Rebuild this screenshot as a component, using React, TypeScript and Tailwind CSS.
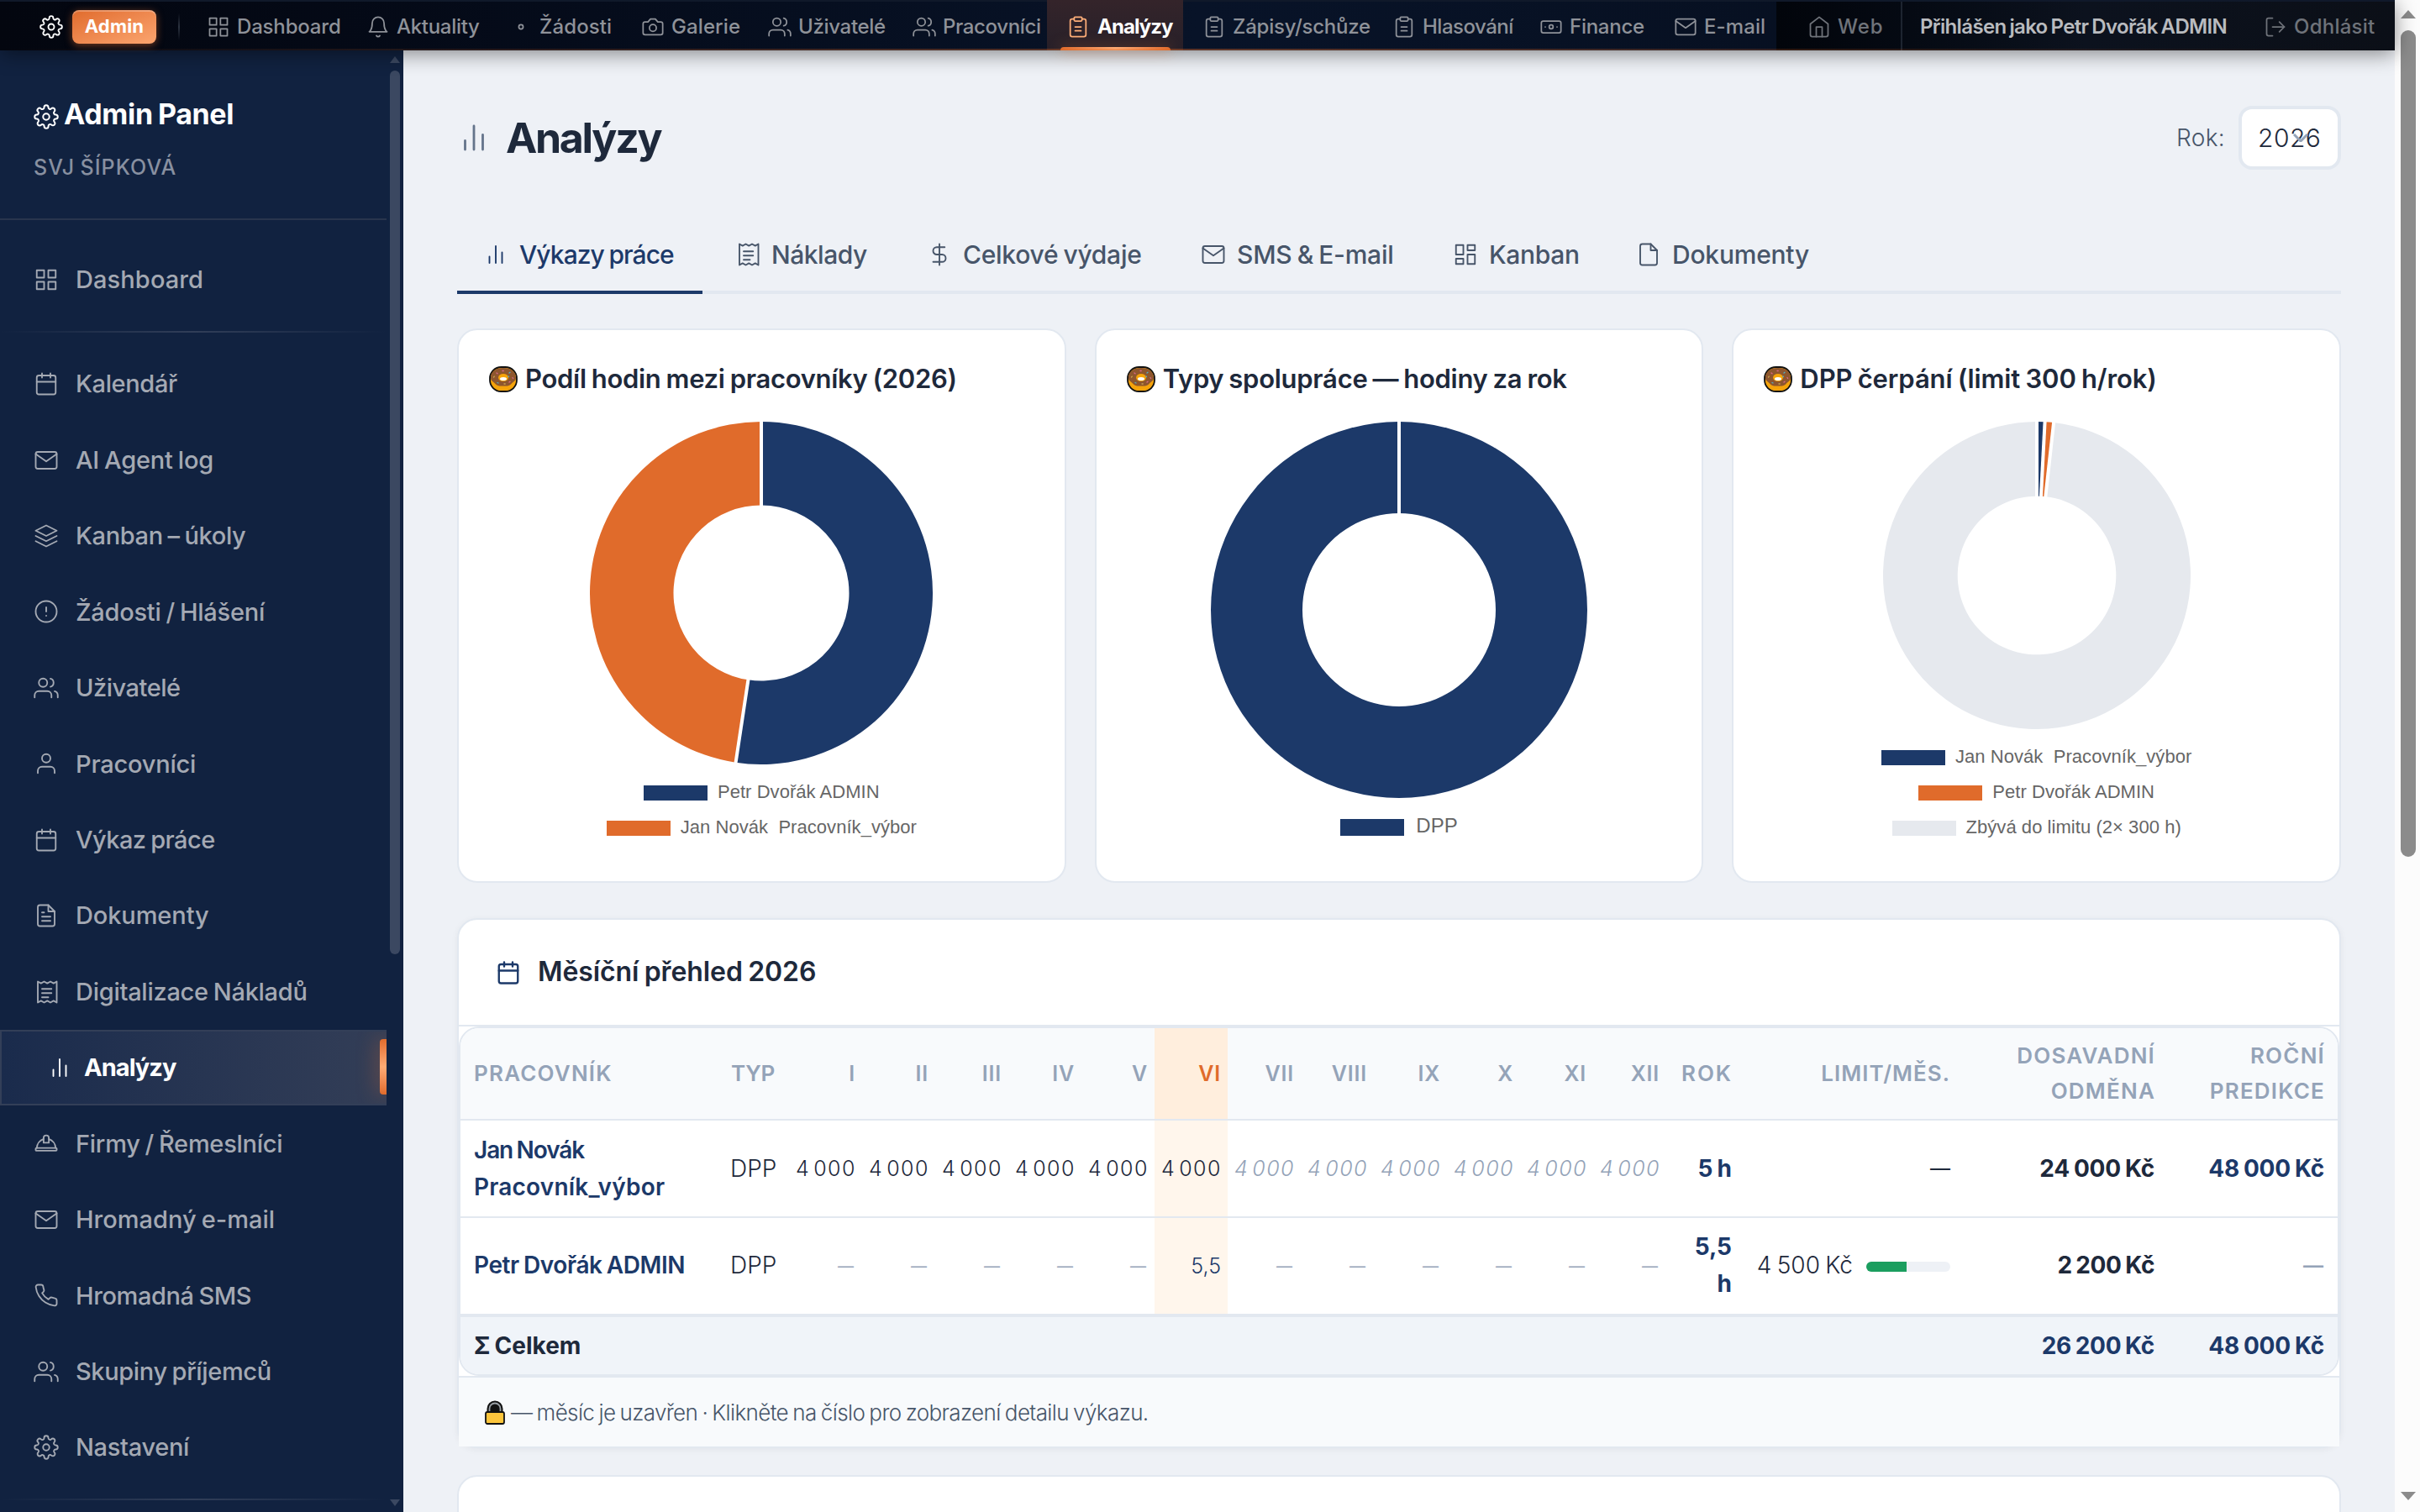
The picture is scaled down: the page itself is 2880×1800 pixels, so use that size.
import type { ReactNode } from 'react';

/* ---------- icons ---------- */

type IconName =
  | 'settings' | 'grid' | 'bell' | 'dot' | 'camera' | 'users' | 'user' | 'clipboard' | 'banknote' | 'mail'
  | 'home' | 'logout' | 'calendar' | 'layers' | 'alert' | 'fileText' | 'file' | 'receipt' | 'bars'
  | 'helmet' | 'phone' | 'dollar' | 'board';

const ICONS: Record<IconName, ReactNode> = {
  settings: (
    <>
      <circle cx="12" cy="12" r="3" />
      <path d="M19.4 15a1.65 1.65 0 0 0 .33 1.82l.06.06a2 2 0 1 1-2.83 2.83l-.06-.06a1.65 1.65 0 0 0-1.82-.33 1.65 1.65 0 0 0-1 1.51V21a2 2 0 0 1-4 0v-.09A1.65 1.65 0 0 0 9 19.4a1.65 1.65 0 0 0-1.82.33l-.06.06a2 2 0 1 1-2.83-2.83l.06-.06A1.65 1.65 0 0 0 4.68 15a1.65 1.65 0 0 0-1.51-1H3a2 2 0 0 1 0-4h.09A1.65 1.65 0 0 0 4.6 9a1.65 1.65 0 0 0-.33-1.82l-.06-.06a2 2 0 1 1 2.83-2.83l.06.06A1.65 1.65 0 0 0 9 4.68a1.65 1.65 0 0 0 1-1.51V3a2 2 0 0 1 4 0v.09a1.65 1.65 0 0 0 1 1.51 1.65 1.65 0 0 0 1.82-.33l.06-.06a2 2 0 1 1 2.83 2.83l-.06.06A1.65 1.65 0 0 0 19.4 9a1.65 1.65 0 0 0 1.51 1H21a2 2 0 0 1 0 4h-.09a1.65 1.65 0 0 0-1.51 1z" />
    </>
  ),
  grid: (
    <>
      <rect x="3" y="3" width="7" height="7" />
      <rect x="14" y="3" width="7" height="7" />
      <rect x="14" y="14" width="7" height="7" />
      <rect x="3" y="14" width="7" height="7" />
    </>
  ),
  bell: (
    <>
      <path d="M18 8A6 6 0 0 0 6 8c0 7-3 9-3 9h18s-3-2-3-9" />
      <path d="M13.73 21a2 2 0 0 1-3.46 0" />
    </>
  ),
  dot: <circle cx="12" cy="12" r="2.2" />,
  camera: (
    <>
      <path d="M14.5 4h-5L7 7H4a2 2 0 0 0-2 2v9a2 2 0 0 0 2 2h16a2 2 0 0 0 2-2V9a2 2 0 0 0-2-2h-3l-2.500-3z" />
      <circle cx="12" cy="13" r="3.500" />
    </>
  ),
  users: (
    <>
      <path d="M17 21v-2a4 4 0 0 0-4-4H5a4 4 0 0 0-4 4v2" />
      <circle cx="9" cy="7" r="4" />
      <path d="M23 21v-2a4 4 0 0 0-3-3.870" />
      <path d="M16 3.130a4 4 0 0 1 0 7.750" />
    </>
  ),
  user: (
    <>
      <path d="M20 21v-2a4 4 0 0 0-4-4H8a4 4 0 0 0-4 4v2" />
      <circle cx="12" cy="7" r="4" />
    </>
  ),
  clipboard: (
    <>
      <path d="M16 4h2a2 2 0 0 1 2 2v14a2 2 0 0 1-2 2H6a2 2 0 0 1-2-2V6a2 2 0 0 1 2-2h2" />
      <rect x="8" y="2" width="8" height="4" rx="1" />
      <path d="M9 12h6M9 16h6" />
    </>
  ),
  banknote: (
    <>
      <rect x="2" y="6" width="20" height="12" rx="2" />
      <circle cx="12" cy="12" r="2" />
      <path d="M6 12h.01M18 12h.01" />
    </>
  ),
  mail: (
    <>
      <rect x="2" y="4" width="20" height="16" rx="2" />
      <path d="m22 6-10 7L2 6" />
    </>
  ),
  home: (
    <>
      <path d="m3 9 9-7 9 7v11a2 2 0 0 1-2 2H5a2 2 0 0 1-2-2z" />
      <path d="M9 22V12h6v10" />
    </>
  ),
  logout: (
    <>
      <path d="M9 21H5a2 2 0 0 1-2-2V5a2 2 0 0 1 2-2h4" />
      <path d="m16 17 5-5-5-5" />
      <path d="M21 12H9" />
    </>
  ),
  calendar: (
    <>
      <rect x="3" y="4" width="18" height="18" rx="2" />
      <path d="M16 2v4M8 2v4M3 10h18" />
    </>
  ),
  layers: (
    <>
      <path d="M12 2 2 7l10 5 10-5-10-5z" />
      <path d="m2 17 10 5 10-5" />
      <path d="m2 12 10 5 10-5" />
    </>
  ),
  alert: (
    <>
      <circle cx="12" cy="12" r="10" />
      <path d="M12 8v4M12 16h.01" />
    </>
  ),
  fileText: (
    <>
      <path d="M14 2H6a2 2 0 0 0-2 2v16a2 2 0 0 0 2 2h12a2 2 0 0 0 2-2V8z" />
      <path d="M14 2v6h6M16 13H8M16 17H8M10 9H8" />
    </>
  ),
  file: (
    <>
      <path d="M14 2H6a2 2 0 0 0-2 2v16a2 2 0 0 0 2 2h12a2 2 0 0 0 2-2V8z" />
      <path d="M14 2v6h6" />
    </>
  ),
  receipt: (
    <>
      <path d="M4 2v20l3-1.700 3 1.700 3-1.700 3 1.700 3-1.700 3 1.700V2l-3 1.700L16 2l-3 1.700L10 2 7 3.700z" />
      <path d="M8 9h9M8 13h9M8 17h6" />
    </>
  ),
  bars: <path d="M18 20V10M12 20V4M6 20v-6" />,
  helmet: (
    <>
      <rect x="2" y="16.500" width="20" height="2.600" rx="0.700" />
      <path d="M3 16.500a9 9.500 0 0 1 6.500-8.500M21 16.500a9 9.500 0 0 0-6.500-8.500" />
      <path d="M9.500 11.500h5V7a2.500 2.500 0 0 0-5 0z" />
    </>
  ),
  phone: (
    <path d="M22 16.920v3a2 2 0 0 1-2.180 2 19.790 19.790 0 0 1-8.630-3.070 19.500 19.500 0 0 1-6-6 19.790 19.790 0 0 1-3.070-8.670A2 2 0 0 1 4.110 2h3a2 2 0 0 1 2 1.720 12.840 12.840 0 0 0 .7 2.810 2 2 0 0 1-.45 2.110L8.090 9.910a16 16 0 0 0 6 6l1.270-1.270a2 2 0 0 1 2.110-.45 12.840 12.840 0 0 0 2.810.7A2 2 0 0 1 22 16.920z" />
  ),
  dollar: <path d="M12 2v20M17 5H9.500a3.500 3.500 0 0 0 0 7h5a3.500 3.500 0 0 1 0 7H6" />,
  board: (
    <>
      <rect x="3" y="3" width="7" height="9" />
      <rect x="14" y="3" width="7" height="5" />
      <rect x="14" y="12" width="7" height="9" />
      <rect x="3" y="16" width="7" height="5" />
    </>
  ),
};

function Icon({ name, className = 'size-[30px]', sw = 1.5 }: { name: IconName; className?: string; sw?: number }) {
  return (
    <svg
      viewBox="0 0 24 24"
      fill="none"
      stroke="currentColor"
      strokeWidth={sw}
      strokeLinecap="round"
      strokeLinejoin="round"
      className={`shrink-0 overflow-visible ${className}`}
    >
      {ICONS[name]}
    </svg>
  );
}

function DonutEmoji() {
  return (
    <svg viewBox="0 0 34 31" className="h-[31px] w-[34px] shrink-0">
      <rect x="1" y="1" width="32" height="29" rx="13.500" fill="#f5a30a" stroke="#111" strokeWidth="1.800" />
      <path d="M2 14C2 6.500 8 2 17 2s15 4.500 15 12c0 4-4 4.500-5.500 7-2.500 3-5.500 2.500-9.500 2.500S10 24 7.500 21C6 18.500 2 18 2 14z" fill="#8e562e" />
      <ellipse cx="17" cy="13.500" rx="6" ry="4.500" fill="#f5a30a" />
      <ellipse cx="17" cy="15" rx="4" ry="2" fill="#fff" />
      <g strokeWidth="1.300" strokeLinecap="round">
        <path d="M9 8l1 .8M24 19l1-.8M16 5.500h1.200M28 13.500l.6 1" stroke="#d9698c" />
        <path d="M24 8l1-.8M10 19.500l1 .5M23 12l.5.6" stroke="#4fb0c6" />
        <path d="M5.500 13l.8-.9M18 21h1.200" stroke="#c9a44c" />
      </g>
    </svg>
  );
}

function LockEmoji() {
  return (
    <svg viewBox="0 0 24 29" className="h-[29px] w-6 shrink-0">
      <path d="M2.500 15V10a9.500 9.500 0 0 1 19 0v5z" fill="#111" />
      <path d="M5.500 15v-5a6.500 6.500 0 0 1 13 0v5" fill="none" stroke="#9aa0a6" strokeWidth="1.800" />
      <rect x="1" y="14" width="22" height="14" rx="2" fill="#fcc53c" stroke="#111" strokeWidth="1.800" />
    </svg>
  );
}

/* ---------- top bar ---------- */

type NavItem = { icon: IconName; label: string; box: string; text: string };

const TOP_NAV: NavItem[] = [
  { icon: 'grid', label: 'Dashboard', box: 'w-[190px]', text: 'tracking-[-0.17px]' },
  { icon: 'bell', label: 'Aktuality', box: 'w-[170px]', text: 'tracking-[-0.3px]' },
  { icon: 'dot', label: 'Žádosti', box: 'w-[157px]', text: 'tracking-[0.1px]' },
  { icon: 'camera', label: 'Galerie', box: 'w-[151px]', text: 'tracking-[0.1px]' },
  { icon: 'users', label: 'Uživatelé', box: 'w-[172px]', text: 'tracking-[-0.32px]' },
  { icon: 'users', label: 'Pracovníci', box: 'w-[160px]', text: 'tracking-[-0.36px]' },
];

const TOP_NAV_AFTER: NavItem[] = [
  { icon: 'clipboard', label: 'Zápisy/schůze', box: 'w-[226px]', text: 'tracking-[-0.23px]' },
  { icon: 'clipboard', label: 'Hlasování', box: 'w-[175px]', text: 'tracking-[-0.5px]' },
  { icon: 'banknote', label: 'Finance', box: 'w-[160px]', text: 'tracking-[-0.26px]' },
  { icon: 'mail', label: 'E-mail', box: 'w-[122px]', text: 'tracking-[0.1px]' },
];

function TopLink({ item }: { item: NavItem }) {
  return (
    <a className={`flex h-full shrink-0 items-center gap-2 ${item.box}`}>
      <Icon name={item.icon} className="size-7" />
      <span className={item.text}>{item.label}</span>
    </a>
  );
}

function TopBar() {
  return (
    <header className="relative z-20 flex h-[60px] w-[2850px] shrink-0 border-t-2 border-t-[#10192a] bg-linear-to-r from-[#03060f] via-[#081328] to-[#060d1b] pt-px text-2xl font-medium whitespace-nowrap text-[#8f9299] shadow-[0_4px_24px_rgba(0,0,0,0.45)]">
      <div className="flex w-[246px] shrink-0 items-center pl-[47px] text-white">
        <Icon name="settings" className="size-7" sw={1.6} />
        <span className="ml-[11px] flex h-10 w-[100px] items-center justify-center rounded-lg bg-linear-to-br from-[#e06b2b] to-[#fba56f] text-[22px] font-bold tracking-[0.2px] shadow-[0_2px_10px_rgba(224,107,43,0.5),inset_0_2px_0_rgba(255,255,255,0.25)]">
          Admin
        </span>
        <span className="ml-[26px] h-8 w-0.5 bg-linear-to-b from-transparent via-[#2c3340] to-transparent" />
      </div>
      {TOP_NAV.map((item) => (
        <TopLink key={item.label} item={item} />
      ))}
      <a className="relative -mt-[3px] flex h-[60px] w-[162px] shrink-0 items-center gap-2 bg-linear-to-b from-[#34242a] to-[#272029] pt-[3px] pl-[23px] font-bold text-white">
        <Icon name="clipboard" className="size-7 text-[#fdae79]" />
        <span className="ml-px tracking-[-0.96px]">Analýzy</span>
        <span className="absolute bottom-0 left-4 h-1 w-[131px] rounded-t bg-linear-to-r from-[#e06b2b] via-[#ffab74] to-[#e06b2b] shadow-[0_0_16px_rgba(224,107,43,0.6)]" />
      </a>
      <div className="flex pl-[23px]">
        {TOP_NAV_AFTER.map((item) => (
          <TopLink key={item.label} item={item} />
        ))}
      </div>
      <div className="-mt-px flex min-w-0 flex-1 bg-linear-to-r from-[#02050b] via-[#0c121e] to-[#0b0f17] pt-px text-[#6f737a]">
        <a className="-mt-px flex w-[150px] shrink-0 items-center gap-2 border-r-2 border-[#1d2430] pt-px pl-[37px]">
          <Icon name="home" className="size-7" />
          <span className="tracking-[0.9px]">Web</span>
        </a>
        <span className="flex w-[430px] shrink-0 items-center pl-[21px] font-semibold tracking-[-0.65px] text-[#b9bbbf]">
          Přihlášen jako Petr Dvořák ADMIN
        </span>
        <a className="flex items-center gap-2">
          <Icon name="logout" className="size-7" />
          <span className="tracking-[0.24px]">Odhlásit</span>
        </a>
      </div>
      <div className="pointer-events-none absolute inset-x-0 bottom-0 h-0.5 bg-linear-to-r from-transparent via-[#e06b2b]/40 to-transparent" />
    </header>
  );
}

/* ---------- sidebar ---------- */

const SIDE_NAV: { icon: IconName; label: string; text: string; active?: boolean }[] = [
  { icon: 'calendar', label: 'Kalendář', text: 'tracking-[-0.37px]' },
  { icon: 'mail', label: 'AI Agent log', text: 'tracking-[-0.2px]' },
  { icon: 'layers', label: 'Kanban – úkoly', text: 'tracking-[-0.38px]' },
  { icon: 'alert', label: 'Žádosti / Hlášení', text: 'tracking-[-0.25px]' },
  { icon: 'users', label: 'Uživatelé', text: 'tracking-[-0.48px]' },
  { icon: 'user', label: 'Pracovníci', text: 'tracking-[-0.22px]' },
  { icon: 'calendar', label: 'Výkaz práce', text: 'tracking-[-0.55px]' },
  { icon: 'fileText', label: 'Dokumenty', text: 'tracking-[-0.1px]' },
  { icon: 'receipt', label: 'Digitalizace Nákladů', text: 'tracking-[-0.27px]' },
  { icon: 'bars', label: 'Analýzy', text: 'tracking-[-0.96px]', active: true },
  { icon: 'helmet', label: 'Firmy / Řemeslníci', text: 'tracking-[-0.27px]' },
  { icon: 'mail', label: 'Hromadný e-mail', text: 'tracking-[0px]' },
  { icon: 'phone', label: 'Hromadná SMS', text: 'tracking-[-0.4px]' },
  { icon: 'users', label: 'Skupiny příjemců', text: 'tracking-[-0.37px]' },
  { icon: 'settings', label: 'Nastavení', text: 'tracking-[-0.33px]' },
];

function Sidebar() {
  return (
    <aside className="flex w-[480px] shrink-0 overflow-hidden bg-[#112240] text-[29px] font-medium whitespace-nowrap text-[#a4a9b3]">
      <div className="flex w-[460px] flex-col">
        <div className="flex h-[202px] shrink-0 flex-col border-b-2 border-[#29354d] pt-[51px] pl-10">
          <div className="flex h-12 items-center gap-[6px] text-[34px] font-bold tracking-[-0.35px] text-white">
            <Icon name="settings" className="mt-2 size-[30px]" sw={1.6} />
            <span>Admin Panel</span>
          </div>
          <div className="mt-[22px] h-9 text-[25px] leading-9 tracking-[1.1px] text-[#8890a0]">SVJ ŠÍPKOVÁ</div>
        </div>
        <a className="mt-[26px] flex h-[90px] shrink-0 items-center gap-5 pl-10">
          <Icon name="grid" />
          <span className="tracking-[0.1px]">Dashboard</span>
        </a>
        <div className="mt-4 h-0.5 shrink-0 bg-linear-to-r from-transparent via-[#313e58] to-transparent" />
        <nav className="mt-4 flex flex-col">
          {SIDE_NAV.map((item) =>
            item.active ? (
              <a
                key={item.label}
                className="relative flex h-[90.430px] items-center gap-[14px] overflow-hidden border-y-2 border-l-2 border-[#333f58] bg-linear-to-r from-[#1a2b4c] to-[#333e57] pl-[54px] font-bold text-white"
              >
                <Icon name={item.icon} />
                <span className={item.text}>{item.label}</span>
                <span className="absolute top-[9px] right-0 h-[66px] w-2 rounded-l bg-linear-to-b from-[#e06b2b] via-[#ffab74] to-[#e06b2b] shadow-[0_0_24px_rgba(224,107,43,0.6)]" />
              </a>
            ) : (
              <a key={item.label} className="flex h-[90.430px] items-center gap-5 pl-10">
                <Icon name={item.icon} />
                <span className={item.text}>{item.label}</span>
              </a>
            ),
          )}
        </nav>
        <div className="mt-4 h-0.5 shrink-0 bg-linear-to-r from-transparent via-[#313e58] to-transparent" />
      </div>
      <div className="flex flex-1 flex-col items-center pr-1 pl-1">
        <svg viewBox="0 0 12 8" className="mt-[7px] h-2 w-3">
          <path d="M6 0l6 8H0z" fill="#3b4861" />
        </svg>
        <div className="mt-[9px] h-[1052px] w-3 rounded-full bg-[#3b4861]" />
        <svg viewBox="0 0 12 8" className="mt-auto mb-[7px] h-2 w-3">
          <path d="M6 8l6-8H0z" fill="#3b4861" />
        </svg>
      </div>
    </aside>
  );
}

/* ---------- donut charts ---------- */

const NAVY = '#1c3969';
const ORANGE = '#e06b2b';
const GREY = '#e6e9ee';

type Slice = { value: number; color: string };

function polar(c: number, r: number, turn: number) {
  const a = turn * 2 * Math.PI - Math.PI / 2;
  return `${c + r * Math.cos(a)} ${c + r * Math.sin(a)}`;
}

function Donut({ size, inner, slices, className }: { size: number; inner: number; slices: Slice[]; className: string }) {
  const c = size / 2;
  const total = slices.reduce((s, x) => s + x.value, 0);
  let at = 0;
  const arcs = slices.map((s) => {
    const start = at;
    at += s.value / total;
    return { ...s, start, end: Math.min(at, start + 0.99999) };
  });
  return (
    <svg viewBox={`0 0 ${size} ${size}`} className={className}>
      {arcs.map((s) => {
        const large = s.end - s.start > 0.5 ? 1 : 0;
        return (
          <path
            key={s.start}
            fill={s.color}
            d={`M${polar(c, c, s.start)}A${c} ${c} 0 ${large} 1 ${polar(c, c, s.end)}L${polar(c, inner, s.end)}A${inner} ${inner} 0 ${large} 0 ${polar(c, inner, s.start)}Z`}
          />
        );
      })}
      {arcs.map((s) => (
        <path key={s.start} d={`M${polar(c, inner - 2, s.start)}L${polar(c, c + 2, s.start)}`} stroke="#fff" strokeWidth="4" />
      ))}
    </svg>
  );
}

function LegendRow({ color, label, big }: { color: string; label: string; big?: boolean }) {
  return (
    <div className={big ? 'flex h-[44px] items-center gap-[14px] text-2xl' : 'flex h-[42px] items-center gap-3 text-[22px] tracking-[0.05px]'}>
      <span className={big ? 'h-5 w-[76px]' : 'h-[18px] w-[76px]'} style={{ backgroundColor: color }} />
      <span className="-mt-1 whitespace-pre">{label}</span>
    </div>
  );
}

function ChartCard({ title, text, children, legend }: { title: string; text: string; children: ReactNode; legend: ReactNode }) {
  return (
    <section className="flex h-[660px] flex-1 flex-col items-center rounded-3xl border-2 border-[#e2e8f0] bg-white pt-[34px]">
      <h2 className="flex h-12 items-center gap-[9px] self-stretch px-9 text-[31px] font-semibold text-[#1e293b]">
        <DonutEmoji />
        <span className={text}>{title}</span>
      </h2>
      <div className="mt-[27px]">{children}</div>
      <div className="mt-[13px] flex flex-col items-center font-['Liberation_Sans',sans-serif] text-[#666] [word-spacing:0px]">
        {legend}
      </div>
    </section>
  );
}

/* ---------- monthly table ---------- */

const MONTHS = ['I', 'II', 'III', 'IV', 'V', 'VI', 'VII', 'VIII', 'IX', 'X', 'XI', 'XII'];
const CURRENT = 5;

function MonthlyTable() {
  return (
    <div className="overflow-hidden rounded-3xl border-2 border-[#e2e8f0]">
      <table className="w-full table-fixed border-separate border-spacing-0 text-[28px] leading-[44px] text-[#1e293b]">
        <colgroup>
          <col className="w-[306px]" />
          <col className="w-[85px]" />
          {MONTHS.map((m) => (
            <col key={m} className="w-[87px]" />
          ))}
          <col className="w-[96px]" />
          <col className="w-[259px]" />
          <col className="w-[243px]" />
          <col className="w-[201px]" />
        </colgroup>
        <thead className="text-[26px] leading-[42px] text-[#94a3b8]">
          <tr className="h-[110px] bg-[#f8fafc] [&>th]:border-b-2 [&>th]:border-[#e2e8f0] [&>th]:p-0 [&>th]:font-semibold">
            <th className="text-left tracking-[1.2px]"><div className="-mt-px pl-4">PRACOVNÍK</div></th>
            <th className="text-left tracking-[-0.3px]"><div className="-mt-px pl-4">TYP</div></th>
            {MONTHS.map((m, i) => (
              <th
                key={m}
                className={
                  i === CURRENT
                    ? 'bg-[#ffeedd] text-right text-[25px] tracking-[0.8px] text-[#e06b2b]'
                    : 'text-right text-[25px] tracking-[0.8px]'
                }
              >
                <div className="pr-2">{m}</div>
              </th>
            ))}
            <th className="text-right tracking-[1.9px]"><div className="-mt-px pr-[17px]">ROK</div></th>
            <th className="text-right tracking-[1px]"><div className="-mt-px pr-[17px]">LIMIT/MĚS.</div></th>
            <th className="text-right tracking-[1.2px]"><div className="pr-[16px]">DOSAVADNÍ<br />ODMĚNA</div></th>
            <th className="text-right tracking-[1.2px]"><div className="pr-[15px]">ROČNÍ<br />PREDIKCE</div></th>
          </tr>
        </thead>
        <tbody>
          <tr className="h-[116px] [&>td]:border-b-2 [&>td]:border-[#e2e8f0] [&>td]:p-0">
            <td className="font-semibold text-[#1c3969]">
              <div className="pl-4">
                <div className="tracking-[-1.1px]">Jan Novák</div>
                <div className="tracking-[0.2px]">Pracovník_výbor</div>
              </div>
            </td>
            <td className="font-light"><div className="pl-[15px]">DPP</div></td>
            {MONTHS.map((m, i) => (
              <td
                key={m}
                className={
                  i === CURRENT
                    ? 'bg-[#fff6ec] text-right text-[25px] font-light tracking-[1.5px] [word-spacing:-4.500px]'
                    : i > CURRENT
                      ? 'text-right text-[25px] font-light tracking-[1.5px] text-[#94a3b8] italic [word-spacing:-4.500px]'
                      : 'text-right text-[25px] font-light tracking-[1.5px] [word-spacing:-4.500px]'
                }
              >
                <div className="pr-[7px]">4 000</div>
              </td>
            ))}
            <td className="text-right font-bold text-[#1c3969]"><div className="pr-[18px]">5 h</div></td>
            <td className="text-right font-normal"><div className="pr-[17px] text-[24px]">—</div></td>
            <td className="text-right font-bold tracking-[-0.2px]"><div className="pr-[17px]">24 000 Kč</div></td>
            <td className="text-right font-bold tracking-[-0.2px] text-[#1c3969]"><div className="pr-4">48 000 Kč</div></td>
          </tr>
          <tr className="h-[114px] [&>td]:p-0">
            <td className="font-semibold tracking-[-0.4px] text-[#1c3969]"><div className="-mt-0.5 pl-4">Petr Dvořák ADMIN</div></td>
            <td className="font-light"><div className="-mt-0.5 pl-[15px]">DPP</div></td>
            {MONTHS.map((m, i) => (
              <td
                key={m}
                className={
                  i === CURRENT
                    ? 'bg-[#fff6ec] text-right text-[25px] font-light text-[#1c3969]'
                    : 'text-right text-[19px] text-[#94a3b8]'
                }
              >
                <div className={i === CURRENT ? 'pr-2' : 'pt-0.5 pr-2.5'}>{i === CURRENT ? '5,5' : '—'}</div>
              </td>
            ))}
            <td className="text-right font-bold text-[#1c3969]"><div className="-mt-0.5 pr-[18px]">5,5<br />h</div></td>
            <td>
              <div className="-mt-0.5 flex items-center justify-end gap-4 pr-[17px] font-light tracking-[0px]">
                4 500 Kč
                <div className="mt-1 h-3 w-[100px] overflow-hidden rounded-full bg-[#eef1f6]">
                  <div className="h-full w-[48px] bg-[#1b9e5f]" />
                </div>
              </div>
            </td>
            <td className="text-right font-bold tracking-[-0.4px]"><div className="-mt-0.5 pr-[17px]">2 200 Kč</div></td>
            <td className="text-right text-[24px] font-semibold text-[#94a3b8]"><div className="pr-[17px]">—</div></td>
          </tr>
        </tbody>
        <tfoot>
          <tr className="h-[72px] bg-[#f0f4f9] font-bold [&>td]:border-t-4 [&>td]:border-[#e2e8f0] [&>td]:p-0">
            <td colSpan={16} className="tracking-[0px]"><div className="pl-4">Σ Celkem</div></td>
            <td className="text-right tracking-[-0.3px] text-[#1c3969]"><div className="pr-[17px]">26 200 Kč</div></td>
            <td className="text-right tracking-[-0.2px] text-[#1c3969]"><div className="pr-4">48 000 Kč</div></td>
          </tr>
        </tfoot>
      </table>
    </div>
  );
}

/* ---------- page ---------- */

const TABS: { icon: IconName; label: string; box: string; text: string }[] = [
  { icon: 'receipt', label: 'Náklady', box: 'w-[220px]', text: 'tracking-[-0.47px]' },
  { icon: 'dollar', label: 'Celkové výdaje', box: 'w-[318px]', text: 'tracking-[-0.27px]' },
  { icon: 'mail', label: 'SMS & E-mail', box: 'w-[292px]', text: 'tracking-[-0.25px]' },
  { icon: 'board', label: 'Kanban', box: 'w-[210px]', text: 'tracking-[-0.3px]' },
  { icon: 'file', label: 'Dokumenty', box: 'w-[270px]', text: 'tracking-[-0.22px]' },
];

function PageScrollbar() {
  return (
    <div className="flex w-[30px] shrink-0 flex-col items-center bg-[#fcfcfc] pl-px">
      <svg viewBox="0 0 18 10" className="mt-3 h-2.5 w-[18px]">
        <path d="M9 0l9 10H0z" fill="#8b8b8b" />
      </svg>
      <div className="mt-3.5 h-[984px] w-[18px] rounded-full bg-[#8b8b8b]" />
      <svg viewBox="0 0 18 10" className="mt-auto mb-3.5 h-2.5 w-[18px]">
        <path d="M9 10l9-10H0z" fill="#8b8b8b" />
      </svg>
    </div>
  );
}

export default function App() {
  return (
    <div className="flex h-[1800px] w-[2880px] overflow-hidden bg-[#eef1f6] font-['Inter','Open_Sans',sans-serif] [word-spacing:-1.500px]">
      <div className="flex w-[2850px] shrink-0 flex-col">
        <TopBar />
        <div className="flex min-h-0 flex-1">
          <Sidebar />
          <main className="flex min-w-0 flex-1 flex-col px-16">
            <div className="mt-[66px] flex h-[76px] shrink-0 items-center">
              <Icon name="bars" className="-ml-px size-[42px] text-[#64748b]" sw={1.6} />
              <h1 className="ml-[17px] text-[50px] font-bold tracking-[-2.3px] text-[#1e293b]">Analýzy</h1>
              <span className="mr-[16px] ml-auto text-[28px] font-light tracking-[0.3px] text-[#475569]">Rok:</span>
              <div className="relative flex h-[76px] w-[122px] items-center rounded-2xl border-4 border-[#e2e8f0] bg-white pl-[19px] text-[30px] font-light tracking-[0.5px] text-[#1e293b]">
                2026
                <svg viewBox="0 0 18 10" className="absolute top-[29px] left-[61px] h-2.5 w-[18px]" fill="none" stroke="#94a3b8" strokeWidth="3">
                  <path d="M1 1l8 8 8-8" />
                </svg>
              </div>
            </div>

            <div className="mt-[57px] flex h-[91px] shrink-0 border-b-4 border-[#e2e8f0] text-[30px] font-medium whitespace-nowrap text-[#475569]">
              <a className="-mb-1 mr-2 flex w-[292px] shrink-0 items-center gap-[13px] border-b-4 border-[#1c3969] pl-[31px] text-[#1c3969]">
                <Icon name="bars" />
                <span className="mt-0.5 tracking-[-0.93px]">Výkazy práce</span>
              </a>
              {TABS.map((t) => (
                <a key={t.label} className={`mr-2 flex shrink-0 items-center gap-[13px] pl-[31px] ${t.box}`}>
                  <Icon name={t.icon} />
                  <span className={`mt-0.5 ${t.text}`}>{t.label}</span>
                </a>
              ))}
            </div>

            <div className="mt-[41px] flex shrink-0 gap-[34px]">
              <ChartCard
                title="Podíl hodin mezi pracovníky (2026)"
                text="tracking-[-0.3px]"
                legend={
                  <>
                    <LegendRow color={NAVY} label="Petr Dvořák ADMIN" />
                    <LegendRow color={ORANGE} label="Jan Novák  Pracovník_výbor" />
                  </>
                }
              >
                <Donut
                  size={408}
                  inner={104.5}
                  className="size-[408px]"
                  slices={[{ value: 5.5, color: NAVY }, { value: 5, color: ORANGE }]}
                />
              </ChartCard>
              <ChartCard
                title="Typy spolupráce — hodiny za rok"
                text="tracking-[-0.28px]"
                legend={<LegendRow color={NAVY} label="DPP" big />}
              >
                <Donut size={448} inner={115} className="size-[448px]" slices={[{ value: 10.5, color: NAVY }]} />
              </ChartCard>
              <ChartCard
                title="DPP čerpání (limit 300 h/rok)"
                text="tracking-[-0.1px]"
                legend={
                  <>
                    <LegendRow color={NAVY} label="Jan Novák  Pracovník_výbor" />
                    <LegendRow color={ORANGE} label="Petr Dvořák ADMIN" />
                    <LegendRow color={GREY} label="Zbývá do limitu (2× 300 h)" />
                  </>
                }
              >
                <Donut
                  size={366}
                  inner={94.3}
                  className="size-[366px]"
                  slices={[{ value: 5, color: NAVY }, { value: 5.5, color: ORANGE }, { value: 589.5, color: GREY }]}
                />
              </ChartCard>
            </div>

            <section className="mt-[42px] shrink-0 rounded-3xl border-2 border-[#e2e8f0] bg-white shadow-[0_2px_8px_rgba(15,23,42,0.05)]">
              <h2 className="flex h-[127px] items-center gap-5 border-b-2 border-[#e2e8f0] pl-11 text-[32px] font-semibold text-[#1e293b]">
                <Icon name="calendar" className="size-[30px] text-[#1c3969]" sw={1.9} />
                <span className="-mt-0.5 tracking-[-0.1px]">Měsíční přehled 2026</span>
              </h2>
              <MonthlyTable />
              <p className="flex h-[84px] items-center gap-[7px] border-t-2 border-[#e2e8f0] bg-[#f8fafc] pl-[31px] text-[26px] font-light tracking-[-0.62px] text-[#475569]">
                <LockEmoji />
                <span>— měsíc je uzavřen · Klikněte na číslo pro zobrazení detailu výkazu.</span>
              </p>
            </section>

            <section className="mt-8 h-40 shrink-0 rounded-t-3xl border-2 border-[#e2e8f0] bg-white" />
          </main>
        </div>
      </div>
      <PageScrollbar />
    </div>
  );
}
